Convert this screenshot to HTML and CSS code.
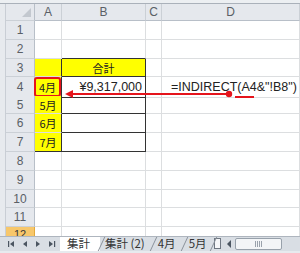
FILE: index.html
```html
<html lang="ja">
<head>
<meta charset="utf-8">
<title>INDIRECT</title>
<link rel="stylesheet" href="styles.css">
</head>
<body>
<div class="top"></div>
<div class="sheet">
  <div class="row head"><div class="rh corner"><span class="tri"></span></div><div class="ch">A</div><div class="ch">B</div><div class="ch">C</div><div class="ch">D</div></div>
  <div class="row r19"><div class="rh">1</div><div class="c"></div><div class="c"></div><div class="c"></div><div class="c"></div></div>
  <div class="row r19"><div class="rh">2</div><div class="c"></div><div class="c bb"></div><div class="c"></div><div class="c"></div></div>
  <div class="row r18"><div class="rh">3</div><div class="c y br"></div><div class="c y br bb mid">合計</div><div class="c"></div><div class="c"></div></div>
  <div class="row r19"><div class="rh">4</div><div class="c y br"><span class="pick">4月</span></div><div class="c br bb num">¥9,317,000</div><div class="c"></div><div class="c formula">=INDIRECT(A4&amp;"!B8")</div></div>
  <div class="row r18"><div class="rh">5</div><div class="c y br mid">5月</div><div class="c br bb"></div><div class="c"></div><div class="c"></div></div>
  <div class="row r19"><div class="rh">6</div><div class="c y br mid">6月</div><div class="c br bb"></div><div class="c"></div><div class="c"></div></div>
  <div class="row r19"><div class="rh">7</div><div class="c y br bb mid">7月</div><div class="c br bb"></div><div class="c"></div><div class="c"></div></div>
  <div class="row r19"><div class="rh">8</div><div class="c"></div><div class="c"></div><div class="c"></div><div class="c"></div></div>
  <div class="row r19"><div class="rh">9</div><div class="c"></div><div class="c"></div><div class="c"></div><div class="c"></div></div>
  <div class="row r18"><div class="rh">10</div><div class="c"></div><div class="c"></div><div class="c"></div><div class="c"></div></div>
  <div class="row r19"><div class="rh">11</div><div class="c"></div><div class="c"></div><div class="c"></div><div class="c"></div></div>
  <div class="row r9"><div class="rh sel">12</div><div class="c"></div><div class="c"></div><div class="c"></div><div class="c"></div></div>

  <!-- reference arrow drawn over the cells -->
  <svg class="marks" width="300" height="253" viewBox="0 0 300 253">
    <line x1="70" y1="94" x2="229" y2="94" stroke="#e5141c" stroke-width="2"/>
    <polygon points="65,94 73,90 73,98" fill="#e5141c"/>
    <circle cx="229" cy="94" r="3.2" fill="#e5141c"/>
    <line x1="235" y1="97" x2="254" y2="97" stroke="#e5141c" stroke-width="2"/>
  </svg>
</div>
<div class="tabbar">
  <div class="nav">
    <svg width="60" height="14" viewBox="0 0 60 14">
      <rect x="8" y="4" width="1.2" height="6" fill="#4b5561"/>
      <polygon points="10,7 14,4 14,10" fill="#4b5561"/>
      <polygon points="23,7 27,4 27,10" fill="#4b5561"/>
      <polygon points="40,7 36,4 36,10" fill="#4b5561"/>
      <polygon points="53,7 49,4 49,10" fill="#4b5561"/>
      <rect x="54" y="4" width="1.2" height="6" fill="#4b5561"/>
    </svg>
  </div>
  <div class="tab active">集計</div>
  <div class="tab t2">集計 (2)</div>
  <div class="tab t3">4月</div>
  <div class="tab t4">5月</div>
  <div class="split"></div>
  <div class="left-btn"></div>
  <div class="hscroll"><div class="thumb"><span class="grip"></span></div></div>
</div>
<div class="bottom"></div>
</body>
</html>
```

FILE: styles.css
```css
body{margin:0; padding:0; width:300px; height:253px; overflow:hidden; background:#e7eaee; font-family:"Liberation Sans", "Noto Sans CJK JP", sans-serif; font-size:12px; color:#222;}

.top{height:3px; background:#eceff2; border-bottom:1px solid #aab1ba;}

/*----------------------------------------------Sheet grid-------------------------------------*/

.sheet{position:relative; margin-left:5px; height:232px; overflow:hidden; background:#fff; border-left:1px solid #c9ced5;}

.row{display:grid; grid-template-columns:29px 27px 84px 16px 1fr;}
.row > div{box-sizing:border-box; border-right:1px solid #dcdee0; border-bottom:1px solid #dcdee0; white-space:nowrap;}
.head{height:17px;}
.r19{height:19px;}
.r18{height:18px;}
.r9{height:9px;}

.rh, .ch{background:#e5e8ed; color:#5a5f66; text-align:center; font-size:12px; display:flex; align-items:center; justify-content:center;}
.row > .rh{border-right:1px solid #b8bfc8; border-bottom:1px solid #cbd0d6;}
.row > .ch{border-right:1px solid #cbd0d6; border-bottom:1px solid #b8bfc8;}
.row > .sel{background:#f7c76b; color:#3a3a3a; align-items:flex-start; padding-top:1px; font-size:11px; border-right-color:#e2a83c;}

.corner{position:relative;}
.tri{position:absolute; right:3px; bottom:3px; width:0; height:0; border-left:9px solid transparent; border-bottom:9px solid #c3c8cf;}

.c{font-size:12px;}
.y{background:#ffff00;}
.row > .br{border-right-color:#333;}
.row > .bb{border-bottom-color:#333;}
.mid{display:flex; align-items:center; justify-content:center; font-family:"Noto Sans CJK JP", sans-serif; font-size:11px; color:#222;}
.num{display:flex; align-items:center; justify-content:flex-end; padding-right:3px; font-size:12.5px; color:#222;}
.formula{display:flex; align-items:center; padding-left:9px; font-size:12.5px; overflow:visible; color:#222;}

.pick{display:flex; box-sizing:border-box; height:100%; align-items:center; justify-content:center; border:2px solid #e5141c; border-radius:3px; font-family:"Noto Sans CJK JP", sans-serif; font-size:11px; margin-left:-1px;}

.marks{position:absolute; left:-6px; top:-4px; pointer-events:none;}

/*----------------------------------------------Tab bar-------------------------------------*/

.tabbar{display:flex; align-items:stretch; height:14px; background:#d9dee4; border-top:1px solid #aeb5be; font-family:"Noto Sans CJK JP", sans-serif; font-size:11.5px; color:#333;}
.nav{width:60px;}
.tab{position:relative; display:flex; align-items:center; line-height:1;}
.tab::after{content:""; position:absolute; right:-2px; top:0; bottom:0; border-right:1px solid #8b929b; transform:skewX(-25deg);}
.tab.active{background:#fff; padding:0 10px 0 7px;}
.t2{padding:0 7px 0 5px;}
.t3{padding:0 7px 0 6px;}
.t4{padding:0 5px 0 6px;}
.split{box-sizing:border-box; width:7px; height:11px; margin:1px 0 0 2px; border:1px solid #6e7681; background:#f5f6f8;}
.left-btn{width:0; height:0; margin:3px 0 0 6px; border-top:4px solid transparent; border-bottom:4px solid transparent; border-right:4px solid #4b5561;}
.hscroll{flex:1; padding:1px 0 1px 4px;}
.thumb{box-sizing:border-box; width:47px; height:12px; border:1px solid #98a1ab; border-radius:2px; background:#f3f5f7; display:flex; align-items:center; justify-content:center;}
.grip{width:7px; height:6px; background:repeating-linear-gradient(90deg, #9aa2ac 0 1px, transparent 1px 2px);}

.bottom{height:3px; background:#e7eaee;}
```
